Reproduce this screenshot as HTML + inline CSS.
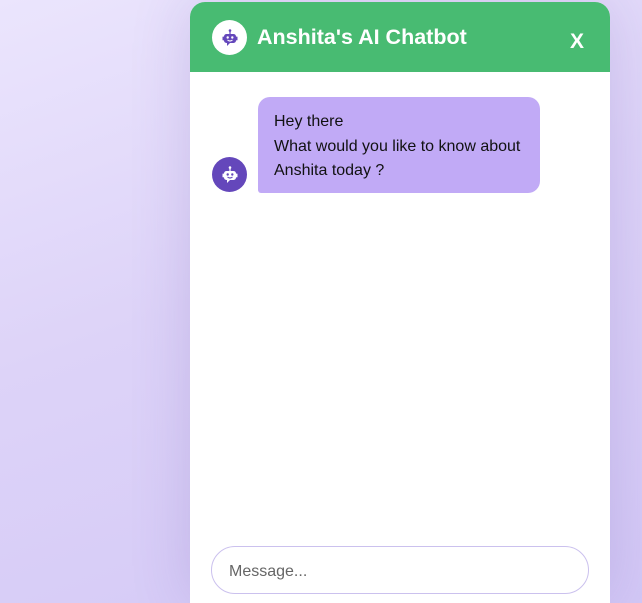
<!DOCTYPE html>
<html><head><meta charset="utf-8"><style>
*{margin:0;padding:0;box-sizing:border-box}
html,body{width:642px;height:603px;overflow:hidden}
body{font-family:"Liberation Sans",sans-serif;
background:linear-gradient(160deg,#ebe5fd 0%,#ddd3f8 45%,#d3c8f6 100%);position:relative}
.panel{position:absolute;left:190px;top:2px;width:420px;height:601px;background:#fff;border-radius:15px 15px 0 0;overflow:hidden;box-shadow:0 0 60px rgba(90,60,160,.18)}
.hdr{height:70px;background:#48bb72;position:relative}
.ic{position:absolute;width:35px;height:35px;border-radius:50%;display:flex;align-items:center;justify-content:center}
.title{position:absolute;left:67px;top:23px;color:#fff;font-weight:bold;font-size:21.5px}
.x{position:absolute;left:380px;top:28px;color:#fff;font-weight:bold;font-size:21px}
.bub{position:absolute;left:68px;top:95px;width:282px;height:96px;background:#c1aaf6;border-radius:12px 12px 12px 3px;padding:13px 16px;font-size:16px;line-height:24.5px;color:#111;white-space:nowrap}
.inp{position:absolute;left:21px;top:544px;width:378px;height:48px;border:1px solid #cbc1ee;border-radius:24px;padding:16px 17px;color:#666;font-size:16px}
</style></head><body>
<div class="panel">
<div class="hdr">
<div class="ic" style="left:22px;top:18px;background:#fff">
<svg width="20" height="20" viewBox="0 0 20 20"><circle cx="10" cy="2.5" r="1.3" fill="#6447bb"/><rect x="9.4" y="3" width="1.2" height="3" fill="#6447bb"/><rect x="4" y="6" width="12" height="9" rx="2.5" fill="#6447bb"/><rect x="2.5" y="8.5" width="1.5" height="4" rx=".7" fill="#6447bb"/><rect x="16" y="8.5" width="1.5" height="4" rx=".7" fill="#6447bb"/><path d="M7 15 L7 18 L10 15Z" fill="#6447bb"/><circle cx="7.7" cy="9.5" r="1.2" fill="#fff"/><circle cx="12.3" cy="9.5" r="1.2" fill="#fff"/><path d="M7.5 12 Q10 14 12.5 12" stroke="#fff" stroke-width="1.1" fill="none"/></svg>
</div>
<div class="title">Anshita's AI Chatbot</div>
<div class="x">X</div>
</div>
<div class="ic" style="left:22px;top:155px;background:#6447bb">
<svg width="20" height="20" viewBox="0 0 20 20"><circle cx="10" cy="2.5" r="1.3" fill="#fff"/><rect x="9.4" y="3" width="1.2" height="3" fill="#fff"/><rect x="4" y="6" width="12" height="9" rx="2.5" fill="#fff"/><rect x="2.5" y="8.5" width="1.5" height="4" rx=".7" fill="#fff"/><rect x="16" y="8.5" width="1.5" height="4" rx=".7" fill="#fff"/><path d="M7 15 L7 18 L10 15Z" fill="#fff"/><circle cx="7.7" cy="9.5" r="1.2" fill="#6447bb"/><circle cx="12.3" cy="9.5" r="1.2" fill="#6447bb"/><path d="M7.5 12 Q10 14 12.5 12" stroke="#6447bb" stroke-width="1.1" fill="none"/></svg>
</div>
<div class="bub">Hey there<br>What would you like to know about<br>Anshita today ?</div>
<div class="inp">Message...</div>
</div>
</body></html>
